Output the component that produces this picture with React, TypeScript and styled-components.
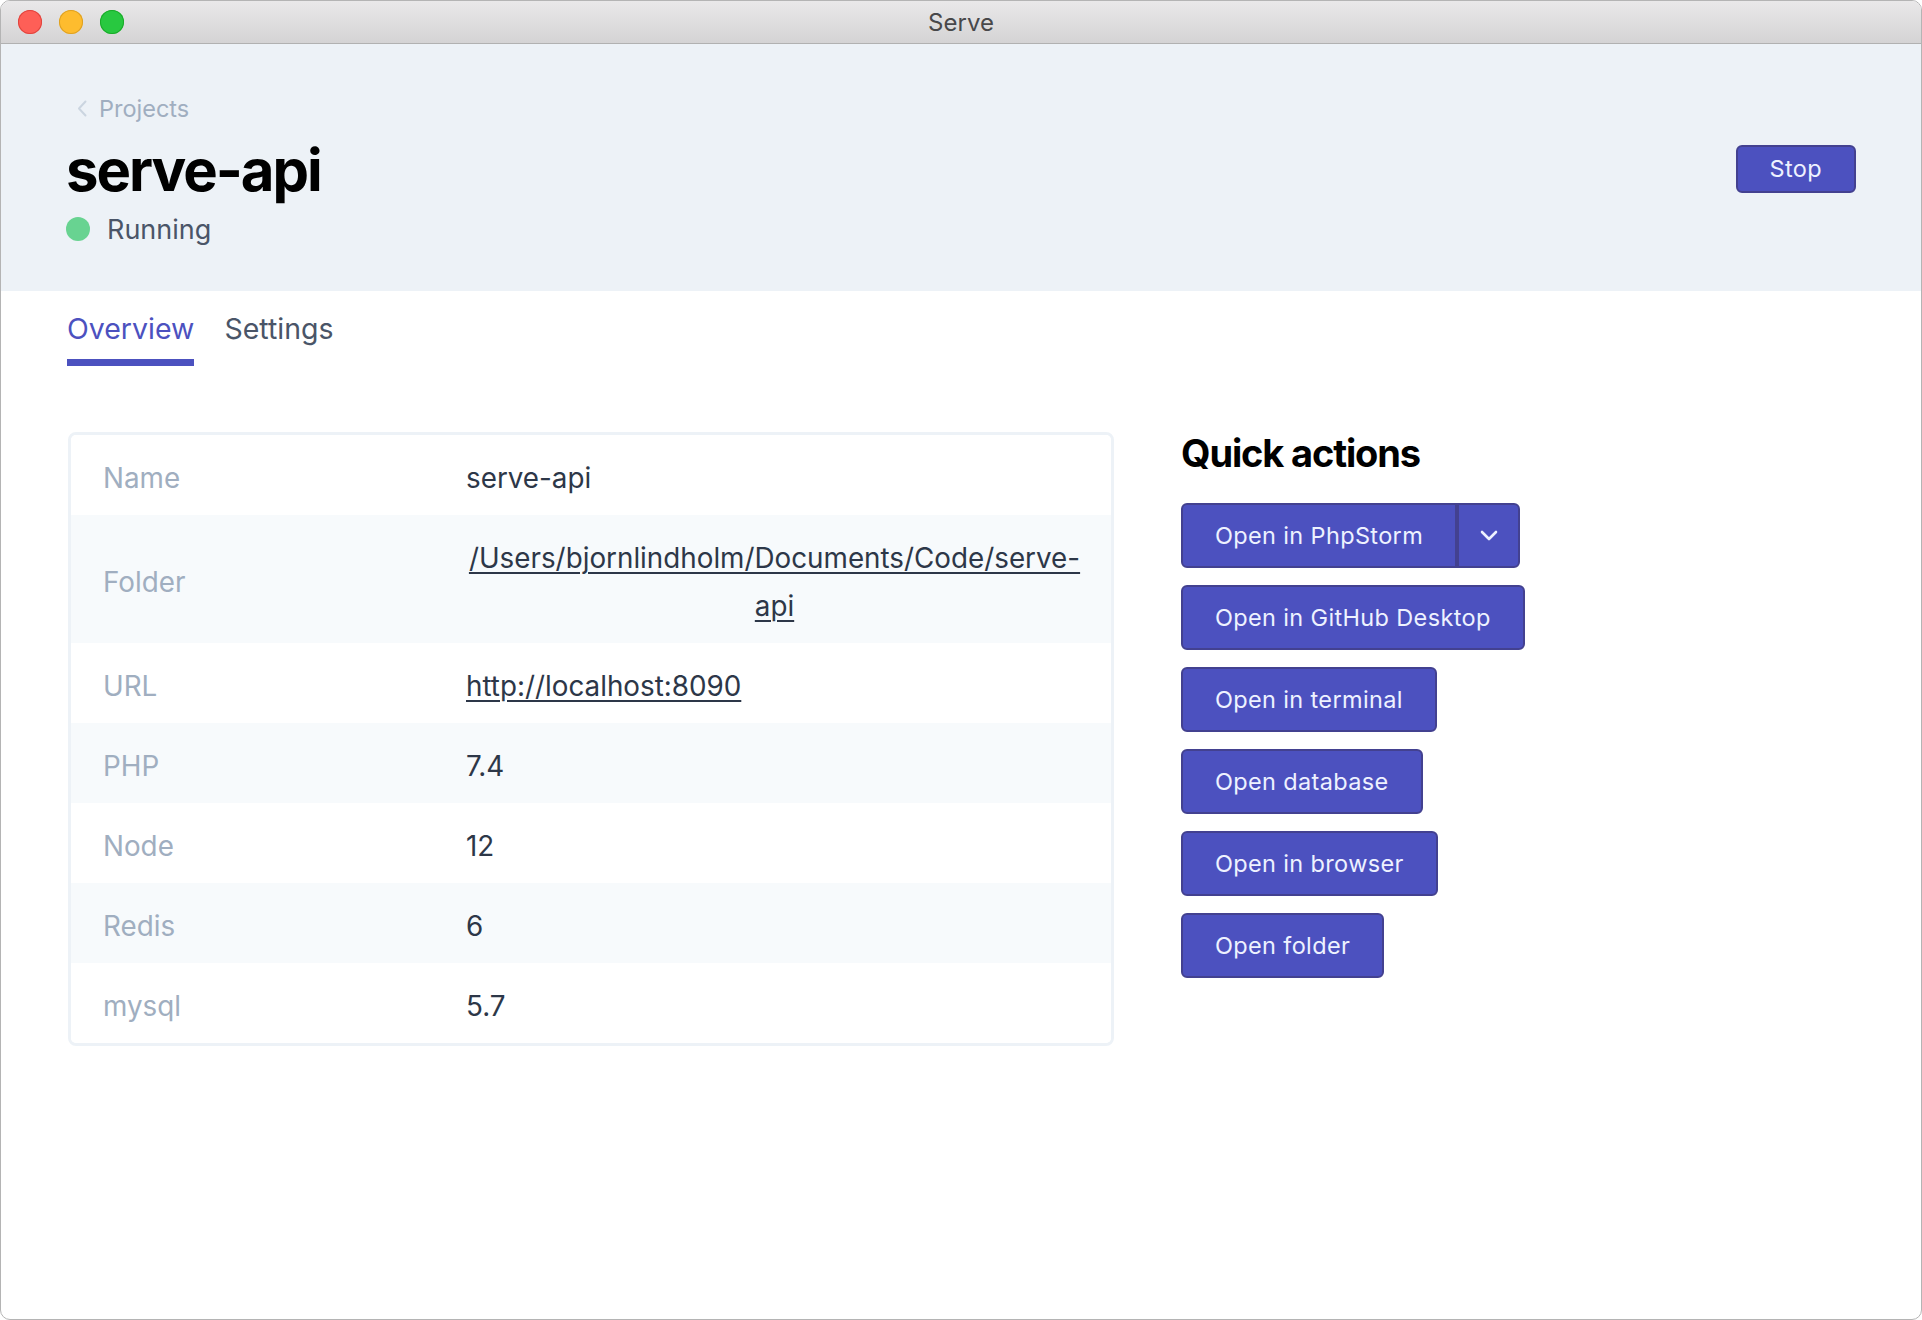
import React from "react"
import styled, { createGlobalStyle } from "styled-components"

const GlobalStyle = createGlobalStyle`
	html, body {
		margin: 0;
		padding: 0;
		background: #ffffff;
	}
	* {
		box-sizing: border-box;
	}
	body {
		font-family: Inter, "Noto Sans", sans-serif;
		-webkit-font-smoothing: antialiased;
	}
`

const Window = styled.div`
	width: 1922px;
	height: 1320px;
	border: 1px solid #b4b4b4;
	border-radius: 10px;
	overflow: hidden;
	display: flex;
	flex-direction: column;
	background: #ffffff;
`

const TitleBar = styled.div`
	height: 43px;
	flex-shrink: 0;
	display: flex;
	align-items: center;
	position: relative;
	background: linear-gradient(#e9e8e9, #d4d3d4);
	border-bottom: 1px solid #b1b1b1;
`

const Lights = styled.div`
	display: flex;
	gap: 17px;
	padding-left: 17px;
`

const Light = styled.span<{ $color: string; $edge: string }>`
	width: 24px;
	height: 24px;
	border-radius: 50%;
	background: ${(p) => p.$color};
	box-shadow: inset 0 0 0 1px ${(p) => p.$edge};
`

const WindowTitle = styled.div`
	position: absolute;
	left: 0;
	right: 0;
	text-align: center;
	font-size: 24px;
	color: #48484a;
	pointer-events: none;
`

const Header = styled.header`
	background: #edf2f7;
	padding: 44px 65px 42px 65px;
	display: flex;
	align-items: center;
	justify-content: space-between;
`

const HeaderText = styled.div`
	display: flex;
	flex-direction: column;
`

const Breadcrumb = styled.a`
	display: flex;
	align-items: center;
	gap: 12px;
	height: 40px;
	padding-left: 11px;
	font-size: 23.5px;
	color: #a0aec0;
	text-decoration: none;
`

const Title = styled.h1`
	margin: 6px 0 0;
	font-size: 58px;
	line-height: 72px;
	font-weight: 700;
	letter-spacing: -0.035em;
	color: #000000;
`

const Status = styled.div`
	display: flex;
	align-items: center;
	gap: 17px;
	height: 40px;
	margin-top: 3px;
	font-size: 27px;
	color: #4a5568;
`

const Dot = styled.span`
	width: 24px;
	height: 24px;
	border-radius: 50%;
	background: #68d391;
`

const Button = styled.button<{ $split?: "left" | "right" }>`
	font-family: Inter, "Noto Sans", sans-serif;
	font-size: 23.5px;
	letter-spacing: 0.015em;
	color: #eef2ff;
	background: #4c51bf;
	border: 2px solid #434190;
	border-radius: ${(p) =>
		p.$split === "left" ? "6px 0 0 6px" : p.$split === "right" ? "0 6px 6px 0" : "6px"};
	padding: 0 32px;
	height: 65px;
	display: flex;
	align-items: center;
	cursor: pointer;
	white-space: nowrap;
`

const StopButton = styled(Button)`
	height: 48px;
	padding: 0 32px;
`

const ChevronButton = styled(Button)`
	width: 63px;
	padding: 0;
	justify-content: center;
`

const Tabs = styled.nav`
	display: flex;
	gap: 30px;
	padding: 0 66px;
`

const Tab = styled.a<{ $active?: boolean }>`
	padding: 18px 0 10px;
	line-height: 40px;
	font-size: 28.5px;
	color: ${(p) => (p.$active ? "#4c51bf" : "#4a5568")};
	border-bottom: 7px solid ${(p) => (p.$active ? "#4c51bf" : "transparent")};
	text-decoration: none;
	cursor: pointer;
`

const Content = styled.main`
	display: grid;
	grid-template-columns: 1046px 1fr;
	column-gap: 67px;
	padding: 66px 66px 0 67px;
	align-items: start;
`

const Card = styled.div`
	border: 3px solid #edf2f7;
	border-radius: 8px;
	overflow: hidden;
`

const Row = styled.div<{ $shaded?: boolean }>`
	display: grid;
	grid-template-columns: 363px 1fr;
	align-items: center;
	padding: 19px 28px 13px 32px;
	background: ${(p) => (p.$shaded ? "#f7fafc" : "#ffffff")};
	font-size: 27.8px;
	line-height: 48px;
`

const Label = styled.div`
	color: #a0aec0;
`

const Value = styled.div`
	color: #2d3748;
`

const LinkButton = styled.button`
	font: inherit;
	color: #2d3748;
	background: none;
	border: 0;
	padding: 0;
	text-align: center;
	text-decoration: underline;
	text-underline-offset: 4px;
	text-decoration-thickness: 1.5px;
	cursor: pointer;
`

const Link = styled.a`
	color: #2d3748;
	text-decoration: underline;
	text-underline-offset: 4px;
	text-decoration-thickness: 1.5px;
`

const Actions = styled.section`
	display: flex;
	flex-direction: column;
	align-items: flex-start;
`

const ActionsTitle = styled.h2`
	margin: 1px 0 30px;
	font-size: 38px;
	line-height: 40px;
	font-weight: 700;
	letter-spacing: -0.03em;
	color: #000000;
`

const ActionList = styled.div`
	display: flex;
	flex-direction: column;
	align-items: flex-start;
	gap: 17px;
`

const Split = styled.div`
	display: flex;
`

const details = [
	{ label: "Name", value: "serve-api" },
	{ label: "Folder", value: "/Users/bjornlindholm/Documents/Code/serve-api", kind: "folder" },
	{ label: "URL", value: "http://localhost:8090", kind: "url" },
	{ label: "PHP", value: "7.4" },
	{ label: "Node", value: "12" },
	{ label: "Redis", value: "6" },
	{ label: "mysql", value: "5.7" },
]

const actions = ["Open in GitHub Desktop", "Open in terminal", "Open database", "Open in browser", "Open folder"]

export default function App() {
	return (
		<>
			<GlobalStyle />
			<Window>
				<TitleBar>
					<Lights>
						<Light $color="#fe5f57" $edge="#e0443e" />
						<Light $color="#febc2e" $edge="#dea123" />
						<Light $color="#28c840" $edge="#1aab29" />
					</Lights>
					<WindowTitle>Serve</WindowTitle>
				</TitleBar>

				<Header>
					<HeaderText>
						<Breadcrumb>
							<svg width="10" height="17" viewBox="0 0 10 17" fill="none">
								<path d="M8.5 1.5L2 8.5l6.5 7" stroke="#cbd5e0" strokeWidth="2" strokeLinecap="round" strokeLinejoin="round" />
							</svg>
							Projects
						</Breadcrumb>
						<Title>serve-api</Title>
						<Status>
							<Dot />
							Running
						</Status>
					</HeaderText>
					<StopButton>Stop</StopButton>
				</Header>

				<Tabs>
					<Tab $active>Overview</Tab>
					<Tab>Settings</Tab>
				</Tabs>

				<Content>
					<Card>
						{details.map((d, i) => (
							<Row key={d.label} $shaded={i % 2 === 1}>
								<Label>{d.label}</Label>
								<Value>
									{d.kind === "folder" ? (
										<LinkButton>{d.value}</LinkButton>
									) : d.kind === "url" ? (
										<Link>{d.value}</Link>
									) : (
										d.value
									)}
								</Value>
							</Row>
						))}
					</Card>

					<Actions>
						<ActionsTitle>Quick actions</ActionsTitle>
						<ActionList>
							<Split>
								<Button $split="left">Open in PhpStorm</Button>
								<ChevronButton $split="right">
									<svg width="18" height="11" viewBox="0 0 18 11" fill="none">
										<path d="M2 2l7 7 7-7" stroke="#eef2ff" strokeWidth="2.6" strokeLinecap="round" strokeLinejoin="round" />
									</svg>
								</ChevronButton>
							</Split>
							{actions.map((a) => (
								<Button key={a}>{a}</Button>
							))}
						</ActionList>
					</Actions>
				</Content>
			</Window>
		</>
	)
}
